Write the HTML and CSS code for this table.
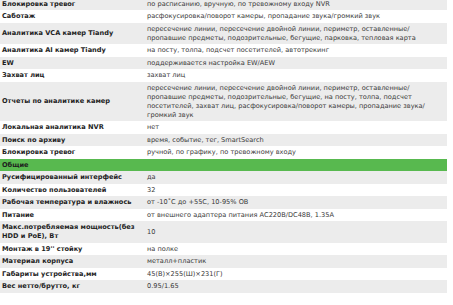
FILE: index.html
```html
<!DOCTYPE html>
<html lang="ru">
<head>
<meta charset="utf-8">
<title>Характеристики</title>
<link rel="stylesheet" href="styles.css">
</head>
<body>
<div class="specs">
  <div class="row alt"><div class="k">Блокировка тревог</div><div class="v">по расписанию, вручную, по тревожному входу NVR</div></div>
  <div class="row"><div class="k">Саботаж</div><div class="v">расфокусировка/поворот камеры, пропадание звука/громкий звук</div></div>
  <div class="row alt"><div class="k">Аналитика VCA камер Tiandy</div><div class="v">пересечение линии, пересечение двойной линии, периметр, оставленные/<br>пропавшие предметы, подозрительные, бегущие, парковка, тепловая карта</div></div>
  <div class="row"><div class="k">Аналитика AI камер Tiandy</div><div class="v">на посту, толпа, подсчет посетителей, автотрекинг</div></div>
  <div class="row alt"><div class="k">EW</div><div class="v">поддерживается настройка EW/AEW</div></div>
  <div class="row"><div class="k">Захват лиц</div><div class="v">захват лиц</div></div>
  <div class="row alt"><div class="k">Отчеты по аналитике камер</div><div class="v">пересечение линии, пересечение двойной линии, периметр, оставленные/<br>пропавшие предметы, подозрительные, бегущие, на посту, толпа, подсчет<br>посетителей, захват лиц, расфокусировка/поворот камеры, пропадание звука/<br>громкий звук</div></div>
  <div class="row"><div class="k">Локальная аналитика NVR</div><div class="v">нет</div></div>
  <div class="row alt"><div class="k">Поиск по архиву</div><div class="v">время, событие, тег, SmartSearch</div></div>
  <div class="row"><div class="k">Блокировка тревог</div><div class="v">ручной, по графику, по тревожному входу</div></div>
  <div class="row group"><div class="k">Общие</div><div class="v"></div></div>
  <div class="row alt"><div class="k">Русифицированный интерфейс</div><div class="v">да</div></div>
  <div class="row"><div class="k">Количество пользователей</div><div class="v">32</div></div>
  <div class="row alt"><div class="k">Рабочая температура и влажнось</div><div class="v">от -10˚C до +55C, 10-95% ОВ</div></div>
  <div class="row"><div class="k">Питание</div><div class="v">от внешнего адаптера питания АС220В/DC48В, 1.35А</div></div>
  <div class="row alt"><div class="k">Макс.потребляемая мощность(без<br>HDD и PoE), Вт</div><div class="v">10</div></div>
  <div class="row"><div class="k">Монтаж в 19'' стойку</div><div class="v">на полке</div></div>
  <div class="row alt"><div class="k">Материал корпуса</div><div class="v">металл+пластик</div></div>
  <div class="row"><div class="k">Габариты устройства,мм</div><div class="v">45(В)×255(Ш)×231(Г)</div></div>
  <div class="row alt"><div class="k">Вес нетто/брутто, кг</div><div class="v">0.95/1.65</div></div>
</div>
</body>
</html>
```
FILE: styles.css
```css
html, body {
  margin: 0;
  padding: 0;
  background: #ffffff;
}

.specs {
  width: 447px;
  margin-top: -2.25px;
  font-family: "DejaVu Sans", Verdana, sans-serif;
  font-size: 6.6px;
  line-height: 9px;
}

.row {
  display: grid;
  grid-template-columns: 145px 1fr;
  align-items: center;
  background: #ffffff;
}

.row.alt {
  background: #ececec;
}

.row.group {
  background: #58b94f;
}

.k {
  padding: 1.75px 2px;
  font-weight: bold;
  color: #1e1e1e;
  white-space: nowrap;
}

.v {
  padding: 1.75px 2px;
  color: #3a3a3a;
  white-space: nowrap;
}
```
